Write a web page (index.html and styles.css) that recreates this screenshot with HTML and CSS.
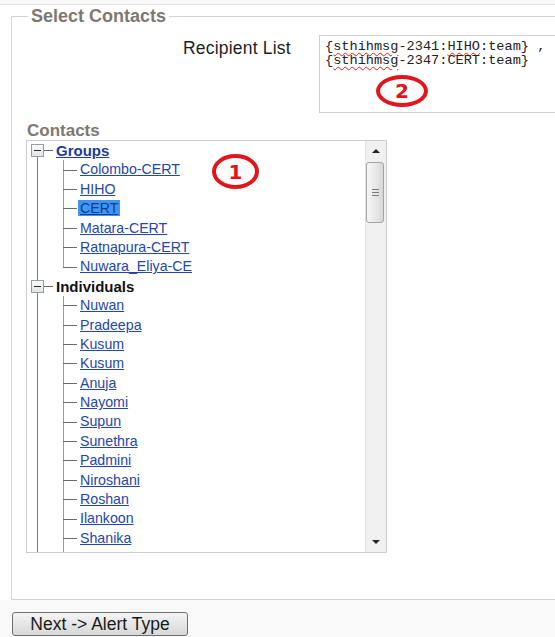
FILE: index.html
```html
<!DOCTYPE html>
<html lang="en">
<head>
<meta charset="utf-8">
<title>Select Contacts</title>
<link rel="stylesheet" href="styles.css">
</head>
<body>
<div class="panel">
  <fieldset class="contacts-set">
    <legend>Select Contacts</legend>

    <div class="recipient">
      <div class="recipient-label">Recipient List</div>
      <div class="recipient-box">
        <div class="recipient-line">{<span class="spell">sthihmsg</span>-2341:<span class="spell">HIHO</span>:team} ,</div>
        <div class="recipient-line">{<span class="spell">sthihmsg</span>-2347:CERT:team}</div>
        <span class="mark mark-two">2</span>
      </div>
    </div>

    <div class="contacts">
      <div class="contacts-label">Contacts</div>
      <div class="tree-box">
        <div class="tree">
          <ul class="roots">
            <li class="node">
              <div class="root-row"><span class="toggle"></span><span class="stub"></span><a class="group-link" href="#">Groups</a></div>
              <ul class="leaves">
                <li class="leaf"><a href="#">Colombo-CERT</a></li>
                <li class="leaf"><a href="#">HIHO</a></li>
                <li class="leaf"><a class="selected" href="#">CERT</a></li>
                <li class="leaf"><a href="#">Matara-CERT</a></li>
                <li class="leaf"><a href="#">Ratnapura-CERT</a></li>
                <li class="leaf"><a href="#">Nuwara_Eliya-CE</a></li>
              </ul>
            </li>
            <li class="node">
              <div class="root-row"><span class="toggle"></span><span class="stub"></span><span class="group-name">Individuals</span></div>
              <ul class="leaves leaves-open">
                <li class="leaf"><a href="#">Nuwan</a></li>
                <li class="leaf"><a href="#">Pradeepa</a></li>
                <li class="leaf"><a href="#">Kusum</a></li>
                <li class="leaf"><a href="#">Kusum</a></li>
                <li class="leaf"><a href="#">Anuja</a></li>
                <li class="leaf"><a href="#">Nayomi</a></li>
                <li class="leaf"><a href="#">Supun</a></li>
                <li class="leaf"><a href="#">Sunethra</a></li>
                <li class="leaf"><a href="#">Padmini</a></li>
                <li class="leaf"><a href="#">Niroshani</a></li>
                <li class="leaf"><a href="#">Roshan</a></li>
                <li class="leaf"><a href="#">Ilankoon</a></li>
                <li class="leaf"><a href="#">Shanika</a></li>
              </ul>
            </li>
          </ul>
        </div>
        <div class="scrollbar">
          <div class="sb-btn"><span class="arrow-up"></span></div>
          <div class="sb-thumb"><span class="grip"></span></div>
          <div class="sb-track"></div>
          <div class="sb-btn"><span class="arrow-down"></span></div>
        </div>
        <span class="mark mark-one">1</span>
      </div>
    </div>
  </fieldset>
</div>
<button class="next-btn" type="button">Next -&gt; Alert Type</button>
</body>
</html>
```

FILE: styles.css
```css
html, body {
  margin: 0;
  background: #f9f9f9;
  font-family: "Liberation Sans", Arial, sans-serif;
}

.panel {
  margin-top: 4px;
  background: #ffffff;
  border-top: 1px solid #e6e6e6;
  padding-left: 11px;
  overflow: hidden;
}

/* outer group box */
.contacts-set {
  margin: 1px 0 0 0;
  padding: 0 0 46px 0;
  border: 1px solid #d4d4d4;
  width: 640px;
  min-width: 0;
}

.contacts-set legend {
  margin-left: 16px;
  padding: 0 3px;
  font-size: 18px;
  line-height: 20px;
  font-weight: bold;
  color: #7d7873;
}

/* recipient list */
.recipient {
  display: flex;
  align-items: flex-start;
  margin: 9px 0 0 171px;
}

.recipient-label {
  width: 136px;
  padding-top: 3px;
  font-size: 17.5px;
  letter-spacing: 0.2px;
  line-height: 20px;
  color: #1e1e1e;
}

.recipient-box {
  position: relative;
  width: 300px;
  height: 78px;
  box-sizing: border-box;
  border: 1px solid #cfcfcf;
  padding: 4px 5px;
  font-family: "Liberation Mono", "Courier New", monospace;
  font-size: 13.6px;
  line-height: 14px;
  color: #222;
}

.recipient-line {
  white-space: pre;
}

.spell {
  text-decoration: underline wavy #e0201c;
  text-decoration-thickness: 1px;
  text-underline-offset: 2px;
}

/* red callout rings */
.mark {
  position: absolute;
  box-sizing: border-box;
  border: 4px solid #e3141c;
  border-radius: 50%;
  display: flex;
  align-items: center;
  justify-content: center;
  color: #e3141c;
  font-family: "DejaVu Sans", sans-serif;
  font-weight: bold;
  font-size: 20px;
  line-height: 1;
}

.mark-two {
  left: 56px;
  top: 39px;
  width: 52px;
  height: 32px;
}

.mark-one {
  left: 185px;
  top: 13px;
  width: 47px;
  height: 35px;
}

/* contacts tree */
.contacts {
  margin: 8px 0 0 14px;
}

.contacts-label {
  padding-left: 1px;
  font-size: 17px;
  line-height: 19px;
  font-weight: bold;
  color: #7d7873;
}

.tree-box {
  position: relative;
  display: flex;
  width: 361px;
  height: 413px;
  box-sizing: border-box;
  border: 1px solid #cdcdcd;
  background: #fff;
}

.tree {
  flex: 1;
  overflow: hidden;
}

.tree ul {
  list-style: none;
  margin: 0;
  padding: 0;
}

.roots {
  background: linear-gradient(#808080, #808080) no-repeat 10px 16px / 1px 100%;
}

.root-row {
  display: flex;
  align-items: center;
  height: 19.4px;
  padding-left: 4px;
}

.toggle {
  width: 13px;
  height: 13px;
  box-sizing: border-box;
  border: 1px solid #939eab;
  background:
    linear-gradient(#2a2a2a, #2a2a2a) no-repeat center / 7px 1px,
    linear-gradient(#ffffff, #e2e2e2);
}

.stub {
  width: 9px;
  height: 1px;
  background: #666;
  margin-right: 3px;
}

.group-link {
  font-size: 15px;
  font-weight: bold;
  color: #1b3c9c;
  text-decoration: underline;
}

.group-name {
  font-size: 15px;
  font-weight: bold;
  color: #111;
}

.leaves {
  background: linear-gradient(#9c9c9c, #9c9c9c) no-repeat 36px 0 / 1px calc(100% - 9.7px);
}

.leaves-open {
  padding-bottom: 12px !important;
  background-size: 1px 100%;
}

.leaf {
  height: 19.4px;
  line-height: 19.4px;
  padding-left: 53px;
  font-size: 14.2px;
  background: linear-gradient(#6b6b6b, #6b6b6b) no-repeat 36px 50% / 14px 1px;
}

.leaf a {
  color: #2546ab;
  text-decoration: underline;
}

.leaf a.selected {
  background: #3d96f2;
  color: #163a8c;
  padding: 0 2px;
  margin-left: -2px;
}

/* vertical scrollbar */
.scrollbar {
  width: 21px;
  box-sizing: border-box;
  border-left: 1px solid #e3e3e3;
  background: #f0f0f0;
  display: flex;
  flex-direction: column;
}

.sb-btn {
  height: 20px;
  display: flex;
  align-items: center;
  justify-content: center;
}

.arrow-up {
  width: 0;
  height: 0;
  border-left: 4px solid transparent;
  border-right: 4px solid transparent;
  border-bottom: 4px solid #222;
}

.arrow-down {
  width: 0;
  height: 0;
  border-left: 4px solid transparent;
  border-right: 4px solid transparent;
  border-top: 4px solid #222;
}

.sb-thumb {
  height: 61px;
  margin: 1px 2px 0 0;
  box-sizing: border-box;
  border: 1px solid #a4a4a4;
  border-radius: 3px;
  background: linear-gradient(90deg, #f6f6f6, #e6e6e6 60%, #d6d6d6);
  display: flex;
  align-items: center;
  justify-content: center;
}

.grip {
  width: 7px;
  height: 7px;
  background: repeating-linear-gradient(#7a7a7a 0 1px, transparent 1px 3px);
}

.sb-track {
  flex: 1;
}

/* footer button */
.next-btn {
  display: block;
  margin: 12px 0 0 12px;
  width: 176px;
  height: 24px;
  padding: 0;
  border: 1px solid #707070;
  border-radius: 3px;
  background: linear-gradient(#f4f4f4, #e6e6e6 50%, #d8d8d8);
  font-family: "Liberation Sans", Arial, sans-serif;
  font-size: 17.5px;
  color: #1a1a1a;
  text-align: center;
}
```
